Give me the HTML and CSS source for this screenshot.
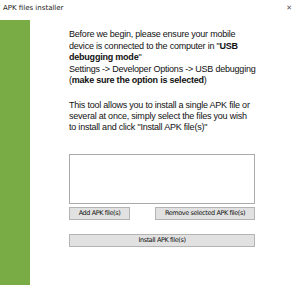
FILE: index.html
```html
<!DOCTYPE html>
<html lang="en">
<head>
    <meta charset="UTF-8">
    <title>APK files installer</title>
    <link rel="stylesheet" href="styles.css">
</head>
<body>
    <div class="titlebar">
        <span class="title">APK files installer</span>
        <span class="close">&#x2715;</span>
    </div>
    <div class="window">
        <div class="sidebar"></div>
        <div class="content">
            <p class="info">
                Before we begin, please ensure your mobile<br>
                device is connected to the computer in "<b>USB</b><br>
                <b>debugging mode</b>"<br>
                <span class="nowrap">Settings -&gt; Developer Options -&gt; USB debugging</span><br>
                (<b>make sure the option is selected</b>)
            </p>
            <p class="info second">
                This tool allows you to install a single APK file or several at once, simply select the files you wish to install and click "Install APK file(s)"
            </p>
            <div class="filelist"></div>
            <div class="button-row">
                <button class="btn add">Add APK file(s)</button>
                <button class="btn remove">Remove selected APK file(s)</button>
            </div>
            <button class="btn install">Install APK file(s)</button>
        </div>
    </div>
</body>
</html>
```

FILE: styles.css
```css
body {
    margin: 0;
    background: #fff;
    font-family: "Liberation Sans", Arial, sans-serif;
}
.titlebar {
    height: 20px;
    display: flex;
    align-items: center;
    justify-content: space-between;
    padding: 0 8px 4px 3px;
    box-sizing: border-box;
}
.title {
    font-family: "DejaVu Sans", sans-serif;
    font-size: 7px;
    color: #222;
}
.close {
    font-family: "DejaVu Sans", sans-serif;
    font-size: 7px;
    color: #555;
}
.window {
    display: flex;
    height: 265px;
}
.sidebar {
    width: 30px;
    background: #79ac45;
}
.content {
    padding-left: 39px;
    width: 186px;
}
.info {
    font-size: 9px;
    letter-spacing: -0.22px;
    line-height: 11.5px;
    color: #111;
    margin: 9px 0 0 0;
}
.nowrap {
    white-space: nowrap;
}
.info.second {
    margin-top: 13px;
    line-height: 11px;
}
.filelist {
    margin-top: 21px;
    height: 48px;
    border: 1px solid #aaa;
}
.button-row {
    display: flex;
    justify-content: space-between;
    margin-top: 3px;
}
.btn {
    font-family: "DejaVu Sans", sans-serif;
    font-size: 6.5px;
    letter-spacing: -0.4px;
    color: #111;
    background: #e1e1e1;
    border: 1px solid #b4b4b4;
    height: 13px;
    padding: 0;
    display: block;
}
.add {
    width: 61px;
}
.remove {
    width: 100px;
}
.install {
    width: 186px;
    margin-top: 14px;
}
```
